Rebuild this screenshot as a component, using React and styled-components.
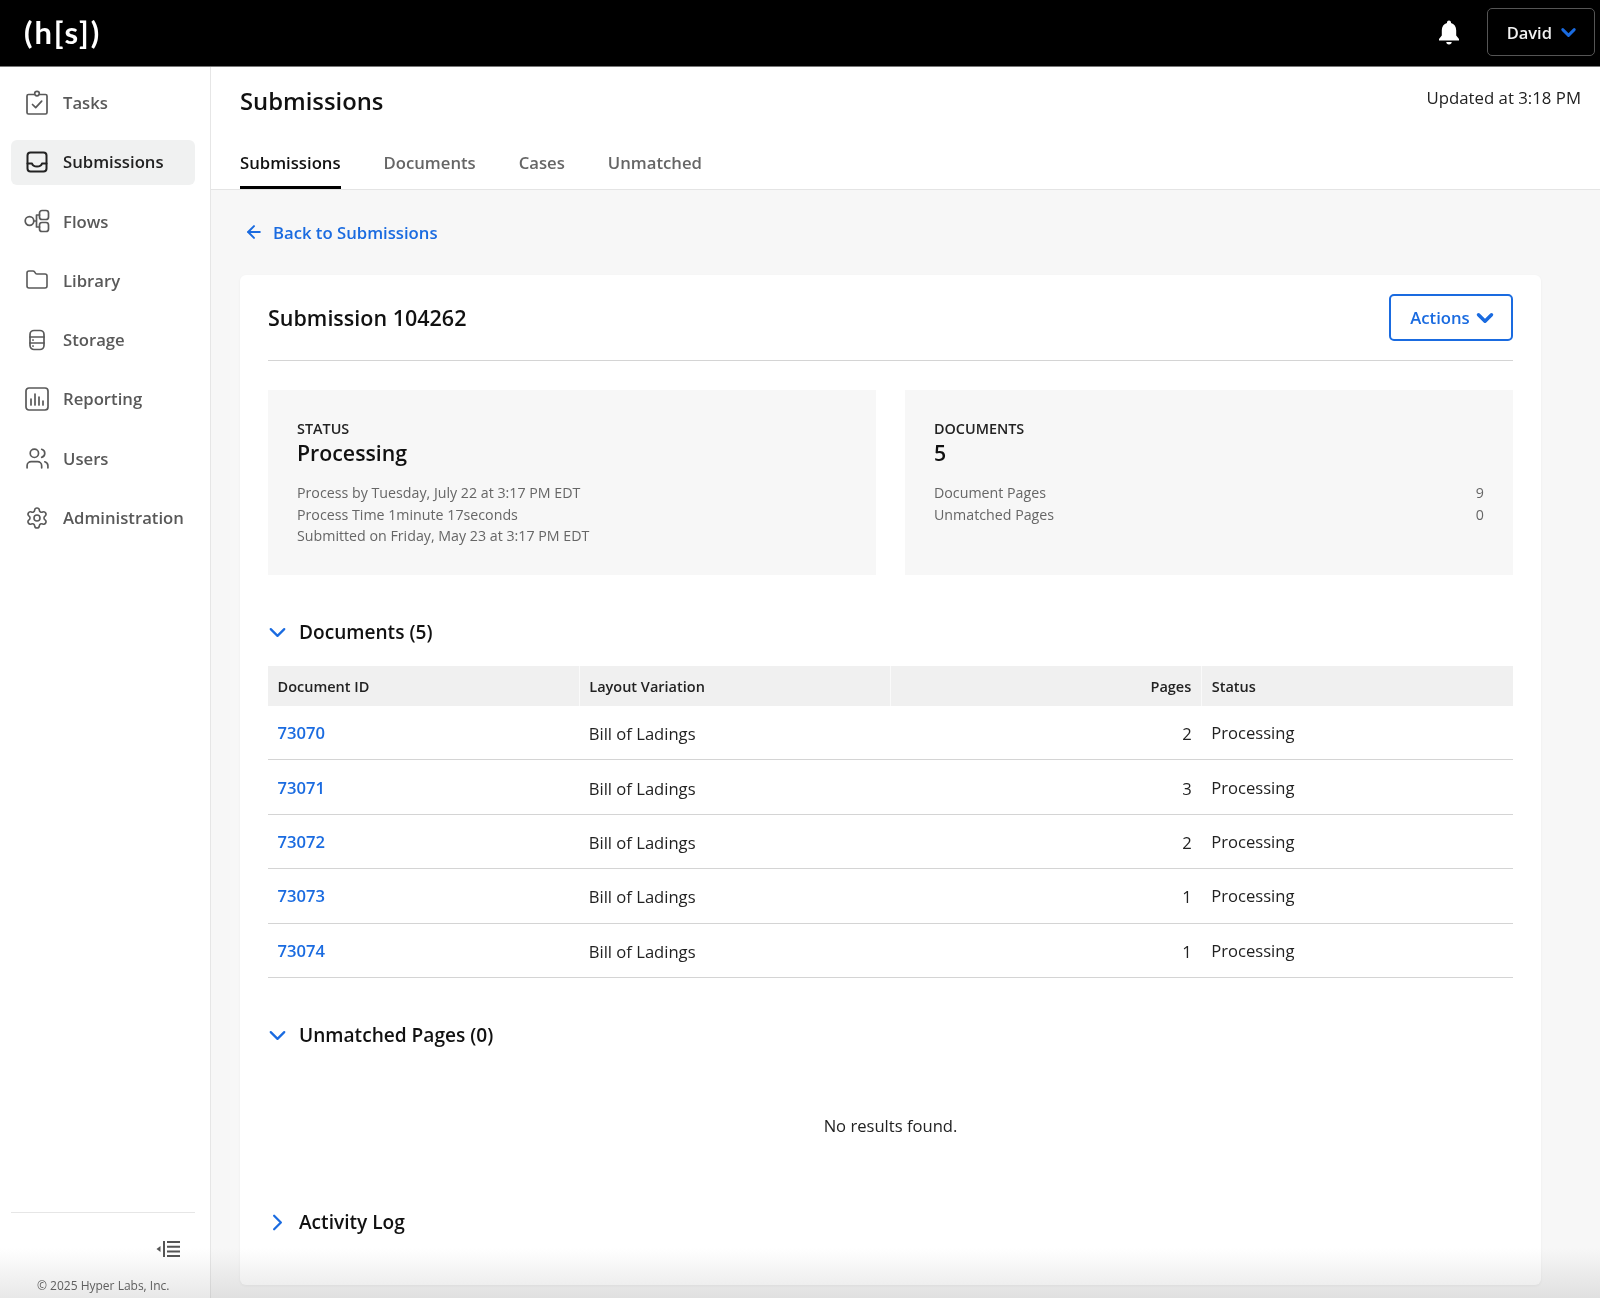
import React from "react";
import styled, { createGlobalStyle } from "styled-components";
import { ArrowLeft, ChevronDown, ChevronRight, Folder, Settings, Users } from "lucide-react";

const GlobalStyle = createGlobalStyle`
	* { box-sizing: border-box; }
	html, body { margin: 0; padding: 0; }
	body {
		font-family: "Open Sans", "Liberation Sans", sans-serif;
		background: #f7f7f7;
		color: #111;
	}
`;

const BLUE = "#1a6be0";

const TasksIcon = () => (
	<svg width="24" height="26" viewBox="0 0 24 26" fill="none" stroke="currentColor" strokeWidth="1.7" strokeLinecap="round" strokeLinejoin="round">
		<path d="M8.5 4.5H3.5a1.5 1.5 0 0 0-1.5 1.5v16.5A1.5 1.5 0 0 0 3.5 24h17a1.5 1.5 0 0 0 1.5-1.5V6a1.5 1.5 0 0 0-1.5-1.5h-5" />
		<circle cx="12" cy="3.6" r="2.3" />
		<path d="M7.5 14.5l3.2 3.2 6-6.5" />
	</svg>
);

const InboxIcon = () => (
	<svg width="22" height="22" viewBox="0 0 22 22" fill="none" stroke="currentColor" strokeWidth="2" strokeLinecap="round" strokeLinejoin="round">
		<rect x="1.5" y="1.5" width="19" height="19" rx="3" />
		<path d="M1.5 12.5h4.5c.6 2 2.4 3 5 3s4.400-1 5-3h4.500" />
	</svg>
);

const FlowsIcon = () => (
	<svg width="26" height="24" viewBox="0 0 26 24" fill="none" stroke="currentColor" strokeWidth="1.7" strokeLinecap="round" strokeLinejoin="round">
		<circle cx="5.500" cy="12" r="4.300" />
		<rect x="15.500" y="1.500" width="9" height="9" rx="2.500" />
		<rect x="15.500" y="13.500" width="9" height="9" rx="2.500" />
		<path d="M9.800 12h2.700M12.500 6h3M12.500 18h3M12.500 6v12" />
	</svg>
);

const StorageIcon = () => (
	<svg width="18" height="22" viewBox="0 0 18 22" fill="none" stroke="currentColor" strokeWidth="1.7" strokeLinecap="round" strokeLinejoin="round">
		<rect x="2" y="1.500" width="14" height="19" rx="4" />
		<path d="M2 8h14M2 14h14M4.800 11h.4M4.800 17h.4" />
	</svg>
);

const ReportingIcon = () => (
	<svg width="24" height="24" viewBox="0 0 24 24" fill="none" stroke="currentColor" strokeWidth="1.7" strokeLinecap="round" strokeLinejoin="round">
		<rect x="1" y="1" width="22" height="22" rx="3" />
		<path d="M6 12v6M10 7v11M14 10v8M18 14v4" />
	</svg>
);

const CollapseIcon = () => (
	<svg width="25" height="18" viewBox="0 0 25 18" fill="none" stroke="#555" strokeWidth="2">
		<path d="M0.500 9L4.500 6v6z" fill="#555" stroke="none" />
		<path d="M8 1v16" />
		<path d="M11 2h13M11 6.800h13M11 11.500h13M11 16h13" />
	</svg>
);

const BellIcon = () => (
	<svg width="22" height="25" viewBox="0 0 22 25" fill="#fff">
		<path d="M11 0.500c-1.100 0-2 .9-2 2v.6C5.800 4 3.800 6.800 3.800 10.200v5.300L1 19v1.500h20V19l-2.800-3.500v-5.300c0-3.400-2-6.200-5.200-7.100v-.6c0-1.100-.9-2-2-2z" />
		<path d="M8.300 22h5.400a2.700 2.400 0 0 1-5.400 0z" />
	</svg>
);

const NAV = [
	{ label: "Tasks", icon: <TasksIcon /> },
	{ label: "Submissions", icon: <InboxIcon />, active: true },
	{ label: "Flows", icon: <FlowsIcon /> },
	{ label: "Library", icon: <Folder size={24} strokeWidth={1.6} /> },
	{ label: "Storage", icon: <StorageIcon /> },
	{ label: "Reporting", icon: <ReportingIcon /> },
	{ label: "Users", icon: <Users size={25} strokeWidth={1.6} /> },
	{ label: "Administration", icon: <Settings size={24} strokeWidth={1.6} /> },
];

const TABS = ["Submissions", "Documents", "Cases", "Unmatched"];

const ROWS = [
	{ id: "73070", pages: 2 },
	{ id: "73071", pages: 3 },
	{ id: "73072", pages: 2 },
	{ id: "73073", pages: 1 },
	{ id: "73074", pages: 1 },
];

function App() {
	return (
		<Page>
			<GlobalStyle />
			<TopBar>
				<Logo>(h[s])</Logo>
				<TopRight>
					<BellIcon />
					<UserButton>
						David
						<ChevronDown size={23} strokeWidth={3} color={BLUE} />
					</UserButton>
				</TopRight>
			</TopBar>
			<Body>
				<Sidebar>
					<NavList>
						{NAV.map((item) => (
							<NavItem key={item.label} $active={item.active}>
								<NavIcon>{item.icon}</NavIcon>
								{item.label}
							</NavItem>
						))}
					</NavList>
					<SideFooter>
						<CollapseRow>
							<CollapseIcon />
						</CollapseRow>
						<Copyright>© 2025 Hyper Labs, Inc.</Copyright>
					</SideFooter>
				</Sidebar>
				<Main>
					<MainHead>
						<TitleRow>
							<PageTitle>Submissions</PageTitle>
							<Updated>Updated at 3:18 PM</Updated>
						</TitleRow>
						<Tabs>
							{TABS.map((t, i) => (
								<Tab key={t} $active={i === 0}>
									{t}
								</Tab>
							))}
						</Tabs>
					</MainHead>
					<Content>
						<BackLink>
							<ArrowLeft size={20} strokeWidth={2.4} />
							Back to Submissions
						</BackLink>
						<Card>
							<CardHead>
								<CardTitle>Submission 104262</CardTitle>
								<ActionsButton>
									Actions
									<ChevronDown size={26} strokeWidth={3.2} />
								</ActionsButton>
							</CardHead>
							<Stats>
								<StatPanel>
									<StatLabel>STATUS</StatLabel>
									<StatValue>Processing</StatValue>
									<StatLines>
										<StatLine>Process by Tuesday, July 22 at 3:17 PM EDT</StatLine>
										<StatLine>Process Time 1minute 17seconds</StatLine>
										<StatLine>Submitted on Friday, May 23 at 3:17 PM EDT</StatLine>
									</StatLines>
								</StatPanel>
								<StatPanel>
									<StatLabel>DOCUMENTS</StatLabel>
									<StatValue>5</StatValue>
									<StatLines>
										<StatLine>
											Document Pages<span>9</span>
										</StatLine>
										<StatLine>
											Unmatched Pages<span>0</span>
										</StatLine>
									</StatLines>
								</StatPanel>
							</Stats>
							<SectionHead>
								<ChevronDown size={27} strokeWidth={2} color={BLUE} />
								Documents (5)
							</SectionHead>
							<Table>
								<thead>
									<tr>
										<Th>Document ID</Th>
										<Th>Layout Variation</Th>
										<Th $right>Pages</Th>
										<Th>Status</Th>
									</tr>
								</thead>
								<tbody>
									{ROWS.map((r) => (
										<tr key={r.id}>
											<Td>
												<DocLink>{r.id}</DocLink>
											</Td>
											<Td $low>Bill of Ladings</Td>
											<Td $right $low>
												{r.pages}
											</Td>
											<Td>Processing</Td>
										</tr>
									))}
								</tbody>
							</Table>
							<SectionHead>
								<ChevronDown size={27} strokeWidth={2} color={BLUE} />
								Unmatched Pages (0)
							</SectionHead>
							<Empty>No results found.</Empty>
							<SectionHead>
								<ChevronRight size={27} strokeWidth={2} color={BLUE} />
								Activity Log
							</SectionHead>
						</Card>
					</Content>
				</Main>
			</Body>
			<BottomFade />
		</Page>
	);
}

const Page = styled.div`
	position: relative;
	width: 1600px;
	height: 1298px;
	overflow: hidden;
	display: flex;
	flex-direction: column;
`;

const TopBar = styled.header`
	height: 67px;
	flex: none;
	background: #000;
	border-bottom: 1px solid #777;
	display: flex;
	align-items: center;
	justify-content: space-between;
	padding: 0 5px 0 24px;
`;

const Logo = styled.div`
	font-family: "Lato", sans-serif;
	font-size: 31px;
	font-weight: 700;
	letter-spacing: 1.9px;
	color: #fff;
	margin-top: -2px;
`;

const TopRight = styled.div`
	display: flex;
	align-items: center;
	gap: 27px;
	margin-top: -2px;
`;

const UserButton = styled.div`
	width: 108px;
	height: 48px;
	border: 1px solid #555;
	border-radius: 5px;
	color: #f2f2f2;
	font-size: 16.500px;
	font-weight: 600;
	display: flex;
	align-items: center;
	justify-content: flex-end;
	gap: 5px;
	padding-right: 14px;
`;

const Body = styled.div`
	flex: 1;
	display: flex;
	min-height: 0;
`;

const Sidebar = styled.aside`
	width: 211px;
	flex: none;
	background: #fff;
	border-right: 1px solid #e6e6e6;
	padding: 14px 15px 4px 11px;
	display: flex;
	flex-direction: column;
`;

const NavList = styled.nav`
	display: flex;
	flex-direction: column;
	gap: 14.300px;
`;

const NavItem = styled.div`
	height: 45px;
	border-radius: 6px;
	display: flex;
	align-items: center;
	gap: 11px;
	padding: 0 0 2px 12px;
	font-size: 16.700px;
	font-weight: 600;
	background: ${(p) => (p.$active ? "#f0f1f1" : "transparent")};
	color: ${(p) => (p.$active ? "#222" : "#595959")};
`;

const NavIcon = styled.span`
	width: 30px;
	display: flex;
	justify-content: center;
	margin-left: -1px;
`;

const SideFooter = styled.div`
	margin-top: auto;
	border-top: 1px solid #e6e6e6;
`;

const CollapseRow = styled.div`
	display: flex;
	justify-content: flex-end;
	padding: 27px 14px 0 0;
`;

const Copyright = styled.div`
	margin-top: 19px;
	padding-left: 26px;
	font-size: 12px;
	line-height: 17px;
	color: #666;
	white-space: nowrap;
`;

const Main = styled.main`
	flex: 1;
	min-width: 0;
	display: flex;
	flex-direction: column;
`;

const MainHead = styled.div`
	height: 123px;
	flex: none;
	background: #fff;
	border-bottom: 1px solid #e4e4e4;
	padding: 0 19px 0 29px;
	display: flex;
	flex-direction: column;
	justify-content: space-between;
`;

const TitleRow = styled.div`
	display: flex;
	justify-content: space-between;
	align-items: flex-start;
	padding-top: 17px;
`;

const PageTitle = styled.h1`
	margin: 0;
	font-size: 23.800px;
	font-weight: 600;
	line-height: 34px;
`;

const Updated = styled.div`
	font-size: 16.800px;
	line-height: 26px;
	color: #222;
	padding-top: 1px;
`;

const Tabs = styled.div`
	display: flex;
	gap: 43px;
`;

const Tab = styled.div`
	height: 43px;
	padding-top: 5px;
	font-size: 16.700px;
	font-weight: 600;
	color: ${(p) => (p.$active ? "#111" : "#666")};
	border-bottom: 3px solid ${(p) => (p.$active ? "#000" : "transparent")};
`;

const Content = styled.div`
	flex: 1;
	padding: 29px 59px 0 29px;
	min-height: 0;
`;

const BackLink = styled.div`
	display: flex;
	align-items: center;
	gap: 9px;
	height: 26px;
	padding-left: 4px;
	font-size: 16.700px;
	font-weight: 600;
	color: ${BLUE};
`;

const Card = styled.section`
	margin-top: 30px;
	height: 1010px;
	background: #fff;
	border-radius: 6px;
	padding: 0 28px;
	box-shadow: 0 1px 3px rgba(0, 0, 0, 0.05);
	overflow: hidden;
`;

const CardHead = styled.div`
	height: 86px;
	border-bottom: 1px solid #d4d4d4;
	display: flex;
	align-items: center;
	justify-content: space-between;
`;

const CardTitle = styled.h2`
	margin: 0;
	font-size: 21.500px;
	font-weight: 600;
`;

const ActionsButton = styled.button`
	width: 124px;
	height: 47px;
	background: #fff;
	border: 2px solid ${BLUE};
	border-radius: 5px;
	color: ${BLUE};
	font-family: inherit;
	font-size: 16.700px;
	font-weight: 600;
	display: flex;
	align-items: center;
	justify-content: center;
	gap: 2px;
	padding: 0 0 0 6px;
`;

const Stats = styled.div`
	margin-top: 29px;
	display: grid;
	grid-template-columns: 1fr 1fr;
	gap: 29px;
`;

const StatPanel = styled.div`
	height: 185px;
	background: #f7f7f7;
	padding: 28px 29px 0;
`;

const StatLabel = styled.div`
	font-size: 14.400px;
	font-weight: 600;
	line-height: 21px;
	color: #222;
`;

const StatValue = styled.div`
	margin-top: 1px;
	font-size: 21.300px;
	font-weight: 600;
	line-height: 26px;
`;

const StatLines = styled.div`
	margin-top: 16px;
`;

const StatLine = styled.div`
	font-size: 14.220px;
	line-height: 21.500px;
	color: #666;
	display: flex;
	justify-content: space-between;
`;

const SectionHead = styled.div`
	margin: 35px 0 12px -4px;
	height: 44px;
	display: flex;
	align-items: center;
	gap: 8px;
	font-size: 19.100px;
	font-weight: 600;
	color: #111;
	svg {
		margin-top: 1px;
	}
`;

const Table = styled.table`
	width: 100%;
	border-collapse: collapse;
	table-layout: fixed;
`;

const Th = styled.th`
	height: 39.600px;
	padding: 2px 10px 0 9.500px;
	background: #f0f0f0;
	border-left: 1px solid #fafafa;
	font-size: 14.500px;
	font-weight: 600;
	color: #222;
	text-align: ${(p) => (p.$right ? "right" : "left")};
	&:first-child {
		border-left: 0;
	}
`;

const Td = styled.td`
	height: 54.400px;
	padding: ${(p) => (p.$low ? "2px" : "0")} 10px 0 9.500px;
	border-bottom: 1px solid #d4d4d4;
	font-size: 16.600px;
	color: #222;
	text-align: ${(p) => (p.$right ? "right" : "left")};
`;

const DocLink = styled.span`
	color: ${BLUE};
	font-weight: 600;
`;

const Empty = styled.div`
	margin: 57px 0 62px;
	text-align: center;
	font-size: 16.600px;
	line-height: 24px;
	color: #222;
`;

const BottomFade = styled.div`
	position: absolute;
	left: 0;
	right: 0;
	bottom: 0;
	height: 50px;
	background: linear-gradient(#fff, #e8e8e8);
	mix-blend-mode: multiply;
	pointer-events: none;
`;

export default App;
